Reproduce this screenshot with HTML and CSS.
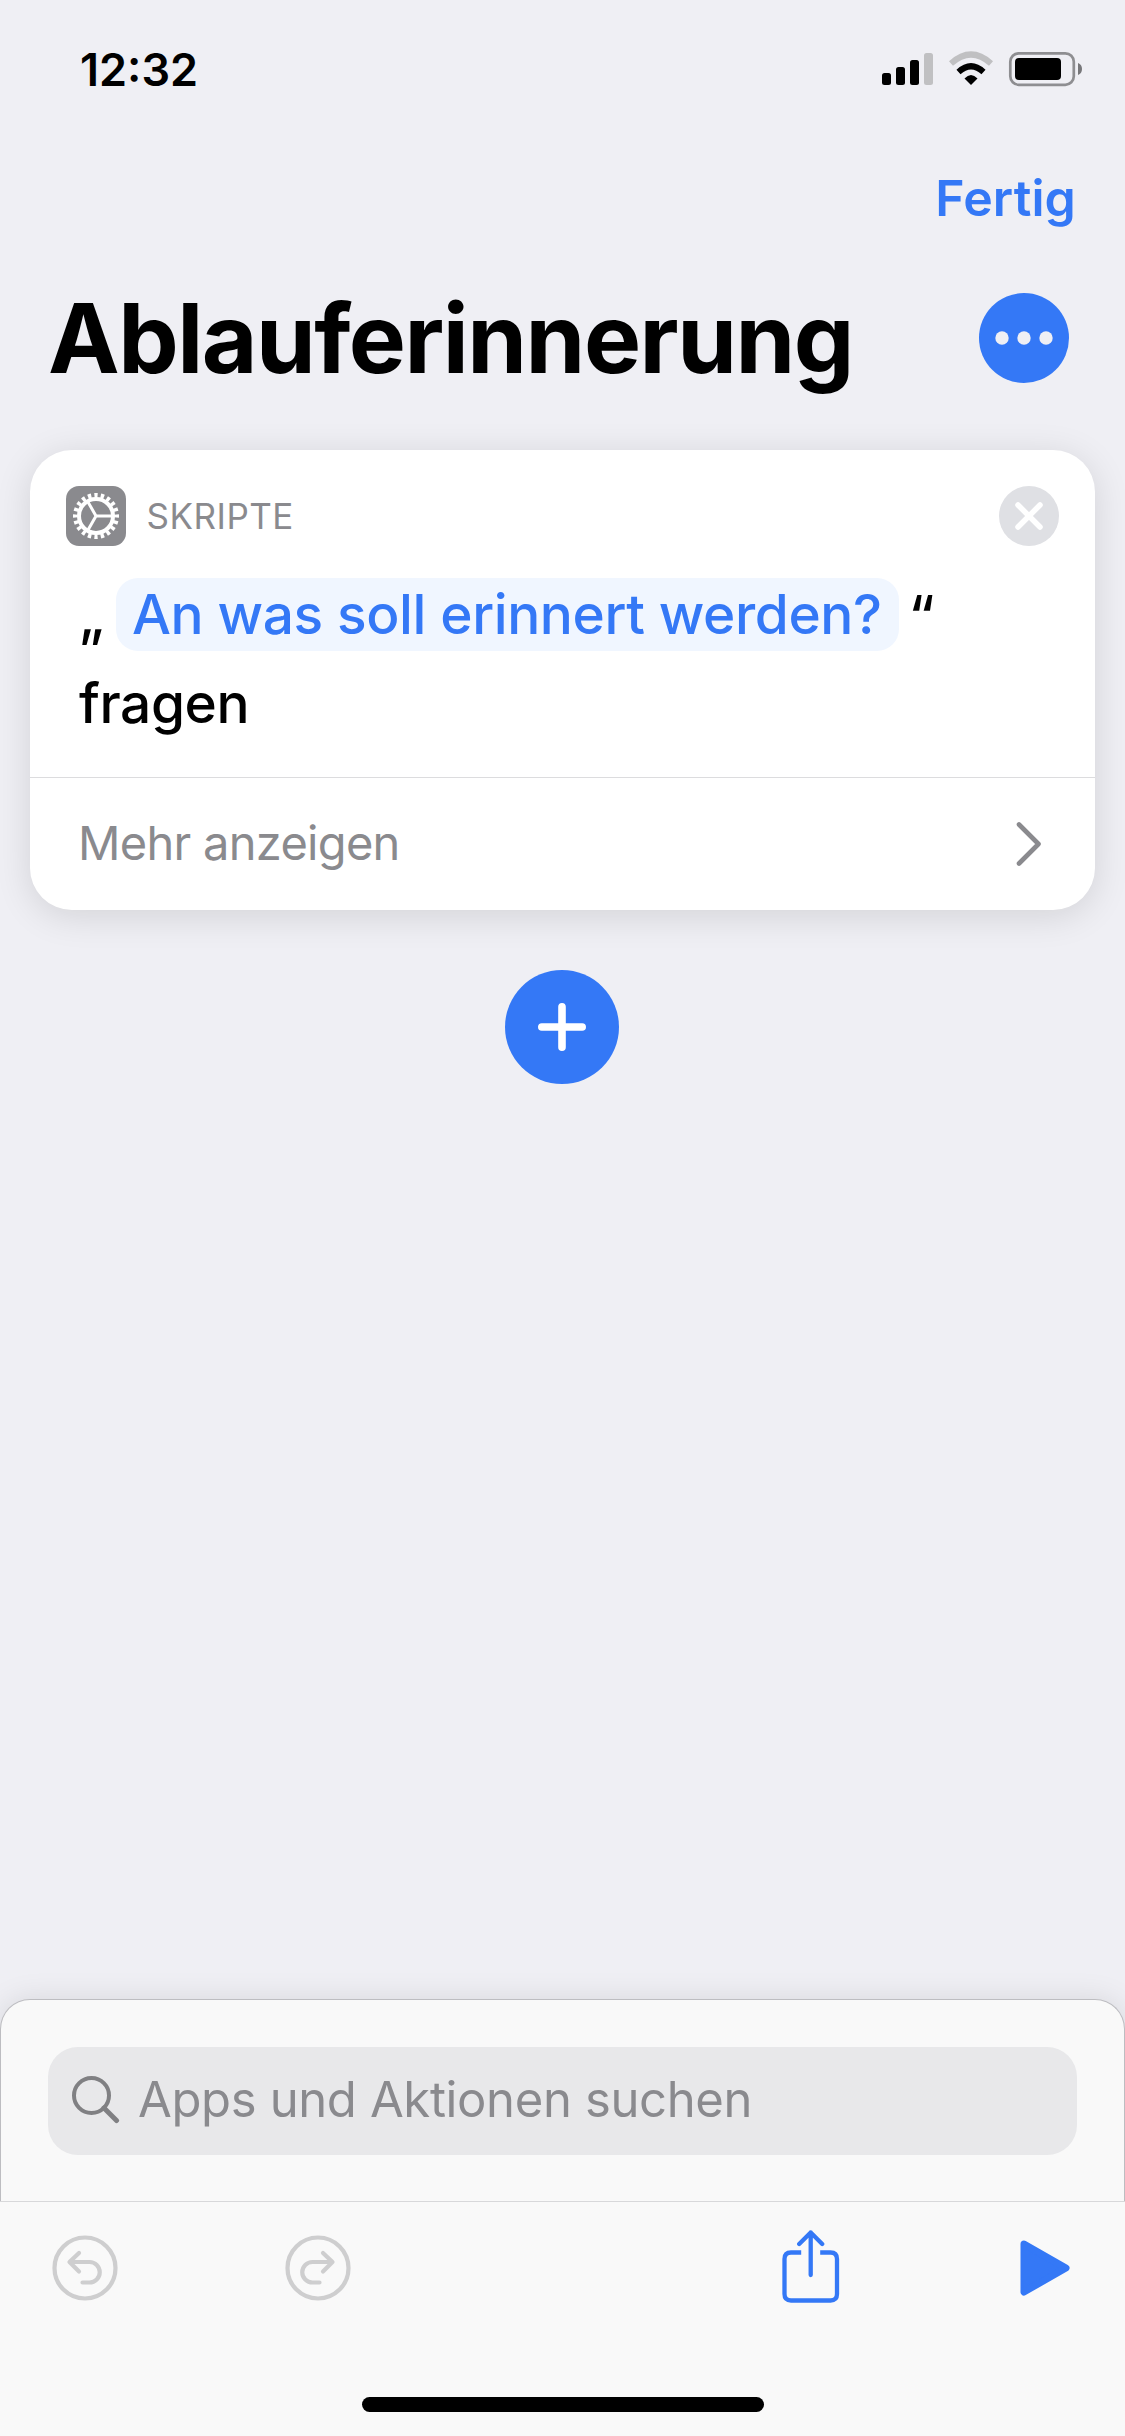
FILE: index.html
```
<!DOCTYPE html>
<html lang="de">
<head>
  <meta charset="UTF-8">
  <meta name="viewport" content="width=device-width, initial-scale=1.0">
  <title>Ablauferinnerung</title>
  <link rel="stylesheet" href="styles.css">
</head>
<body>
  <div class="status-bar">
    <span class="time">12:32</span>
    <svg class="status-icons" width="202" height="36" viewBox="881 51 202 36">
      <rect x="882" y="73" width="9" height="12" rx="2.5"/>
      <rect x="896" y="67" width="9" height="18" rx="2.5"/>
      <rect x="910" y="60" width="9" height="25" rx="2.5"/>
      <rect x="924" y="53" width="9" height="32" rx="2.5" fill="#c0c0c2"/>
      <path d="M951 63.5Q971 45.500 991 63.500" fill="none" stroke="#c0c0c2" stroke-width="6"/>
      <path d="M958.500 72Q971 60.500 983.500 72" fill="none" stroke="#000" stroke-width="6"/>
      <path d="M964.500 78.500Q971 71.500 977.500 78.500L971 85Z"/>
      <rect x="1010.300" y="53.300" width="63.500" height="31.500" rx="8.500" fill="none" stroke="#8e8e91" stroke-width="2.700"/>
      <rect x="1015" y="58" width="46" height="22" rx="4"/>
      <path d="M1078 63q4 1.500 4 6t-4 6z" fill="#77777a"/>
    </svg>
  </div>
  <nav>
    <a class="done">Fertig</a>
  </nav>
  <header>
    <h1>Ablauferinnerung</h1>
    <svg class="more" width="90" height="90" viewBox="0 0 90 90">
      <circle cx="45" cy="45" r="45" fill="#3478f6"/>
      <circle cx="23" cy="45" r="6.700" fill="#efeff4"/>
      <circle cx="45" cy="45" r="6.700" fill="#efeff4"/>
      <circle cx="67" cy="45" r="6.700" fill="#efeff4"/>
    </svg>
  </header>
  <main>
    <div class="card">
      <div class="card-head">
        <svg class="gear" width="60" height="60" viewBox="0 0 60 60">
          <rect width="60" height="60" rx="13" fill="#8a8a8e"/>
          <g fill="none" stroke="#fff">
            <circle cx="30" cy="30" r="17" stroke-width="4"/>
            <circle cx="30" cy="30" r="20.500" stroke-width="5" pathLength="180" stroke-dasharray="4.600 4.400" stroke-dashoffset="2.300"/>
            <path d="M30 30H46M30 30L22 16M30 30L22 44" stroke-width="3"/>
          </g>
        </svg>
        <span class="category">SKRIPTE</span>
        <svg class="close" width="60" height="60" viewBox="0 0 60 60">
          <circle cx="30" cy="30" r="30" fill="#dfe0e4"/>
          <path d="M19 19L41 41M41 19L19 41" stroke="#fff" stroke-width="5.500" stroke-linecap="round"/>
        </svg>
      </div>
      <div class="action">
        <div class="line"><span class="quote">„</span><span class="pill">An was soll erinnert werden?</span><span class="quote end">“</span></div>
        <div class="line"><span class="ask">fragen</span></div>
      </div>
      <div class="show-more">
        <span class="show-label">Mehr anzeigen</span>
        <svg width="28" height="46" viewBox="0 0 28 46">
          <path d="M4 3.500L23.500 23L4 42.500" fill="none" stroke="#8a8a8e" stroke-width="4.600" stroke-linecap="round" stroke-linejoin="round"/>
        </svg>
      </div>
    </div>
    <svg class="add" width="114" height="114" viewBox="0 0 114 114">
      <circle cx="57" cy="57" r="57" fill="#3478f6"/>
      <path d="M57 36.800V77.200M36.800 57H77.200" stroke="#fff" stroke-width="7.600" stroke-linecap="round"/>
    </svg>
  </main>
  <div class="sheet">
    <div class="search">
      <svg width="48" height="50" viewBox="0 0 48 50">
        <circle cx="19.500" cy="19.500" r="17.500" fill="none" stroke="#808083" stroke-width="4"/>
        <path d="M32 32L44.500 44.500" stroke="#808083" stroke-width="5" stroke-linecap="round"/>
      </svg>
      <span class="search-text">Apps und Aktionen suchen</span>
    </div>
  </div>
  <footer>
    <div class="toolbar">
      <svg class="undo" width="66" height="66" viewBox="0 0 66 66">
        <g fill="none" stroke="#cececf" stroke-width="4.200" stroke-linecap="round" stroke-linejoin="round">
          <circle cx="33" cy="33" r="30.500"/>
          <path d="M27 18L17.500 27L27 36.500M18.500 27H37.500A10 10 0 0 1 37.500 47.500H30.500"/>
        </g>
      </svg>
      <svg class="redo" width="66" height="66" viewBox="0 0 66 66">
        <g fill="none" stroke="#cececf" stroke-width="4.200" stroke-linecap="round" stroke-linejoin="round">
          <circle cx="33" cy="33" r="30.500"/>
          <path d="M38 18L47.500 27L38 36.500M46.500 27H27.500A10 10 0 0 0 27.500 47.500H34.500"/>
        </g>
      </svg>
      <svg class="share" width="58" height="74" viewBox="0 0 58 74">
        <g fill="none" stroke="#3478f6" stroke-width="4.300" stroke-linecap="round" stroke-linejoin="round">
          <path d="M28.700 2.500V45M17.200 14L28.700 2.500L40.200 14"/>
          <path d="M19.200 22.500H9Q2.500 22.500 2.500 29V64Q2.500 70.500 9 70.500H48.500Q55 70.500 55 64V29Q55 22.500 48.500 22.500H38.200" stroke-linecap="butt"/>
        </g>
      </svg>
      <svg class="play" width="50" height="56" viewBox="0 0 50 56">
        <path d="M4 4L46 28L4 52Z" fill="#3478f6" stroke="#3478f6" stroke-width="7" stroke-linejoin="round"/>
      </svg>
    </div>
    <div class="home-indicator"></div>
  </footer>
</body>
</html>
```
FILE: styles.css
```
* {
  box-sizing: border-box;
}
body {
  font-family: Inter, "Liberation Sans", sans-serif;
  background-color: #efeff4;
  margin: 0;
  height: 2436px;
  display: flex;
  flex-direction: column;
  overflow: hidden;
  color: #000;
}
svg {
  display: block;
  flex-shrink: 0;
}
span, a, h1 {
  white-space: nowrap;
}
.status-bar {
  height: 138px;
  padding: 0 42px 0 80px;
  display: flex;
  justify-content: space-between;
  align-items: center;
}
.time {
  font-size: 45px;
  font-weight: 600;
  letter-spacing: 0;
}
nav {
  height: 120px;
  padding-right: 49px;
  display: flex;
  justify-content: flex-end;
  align-items: center;
}
.done {
  color: #3478f6;
  font-size: 50px;
  font-weight: 600;
  letter-spacing: 0.1px;
}
header {
  height: 160px;
  padding: 0 56px 0 48px;
  display: flex;
  justify-content: space-between;
  align-items: center;
}
h1 {
  margin: 0;
  font-size: 96px;
  font-weight: 700;
  letter-spacing: -1.5px;
}
main {
  flex: 1;
  padding: 32px 30px 0;
}
.card {
  height: 460px;
  background-color: #fff;
  border-radius: 42px;
  box-shadow: 0 6px 36px rgba(0, 0, 0, 0.12);
}
.card-head {
  padding: 36px 36px 0;
  display: flex;
  align-items: center;
}
.category {
  margin-left: 20.5px;
  font-size: 35px;
  letter-spacing: 0.5px;
  color: #8a8a8e;
}
.close {
  margin-left: auto;
}
.action {
  height: 232px;
  padding: 32px 48px 0;
  border-bottom: 1px solid #dcdcde;
}
.line {
  display: flex;
  height: 73px;
  align-items: center;
  margin-bottom: 15px;
  font-size: 55px;
  font-weight: 500;
  letter-spacing: -0.4px;
}
.quote {
  width: 37.5px;
  padding-left: 1px;
}
.end {
  padding-left: 10px;
}
.ask {
  padding-left: 1px;
}
.pill {
  width: 783px;
  height: 73px;
  line-height: 73px;
  padding-left: 16.5px;
  border-radius: 22px;
  background-color: #f0f6ff;
  color: #3478f6;
}
.show-more {
  height: 132px;
  padding: 0 52px 0 48px;
  display: flex;
  justify-content: space-between;
  align-items: center;
}
.show-label {
  font-size: 47px;
  letter-spacing: -0.7px;
  padding-bottom: 3px;
  color: #8a8a8e;
}
.add {
  margin: 60px auto 0 475px;
}
.sheet {
  height: 202px;
  padding: 47px 47px 0;
  background-color: #f9f9f9;
  border: 1px solid #bdbdc1;
  border-bottom: none;
  border-radius: 30px 30px 0 0;
  box-shadow: 0 0 30px rgba(0, 0, 0, 0.1);
}
.search {
  height: 108px;
  padding-left: 24px;
  border-radius: 30px;
  background-color: #e8e8ea;
  display: flex;
  align-items: center;
}
.search-text {
  margin-left: 18px;
  padding-bottom: 3px;
  font-size: 49px;
  letter-spacing: -0.36px;
  color: #8a8a8e;
}
footer {
  height: 235px;
  background-color: #f9f9f9;
  border-top: 1px solid #d8d8da;
}
.toolbar {
  display: flex;
  align-items: center;
  height: 132px;
  padding: 0 55px 0 51.5px;
}
.redo {
  margin-left: 167px;
}
.share {
  margin-left: auto;
  margin-bottom: 2px;
}
.play {
  margin-left: 180px;
}
.home-indicator {
  width: 402px;
  height: 15px;
  margin: 63px auto 0;
  border-radius: 8px;
  background-color: #000;
}
```
